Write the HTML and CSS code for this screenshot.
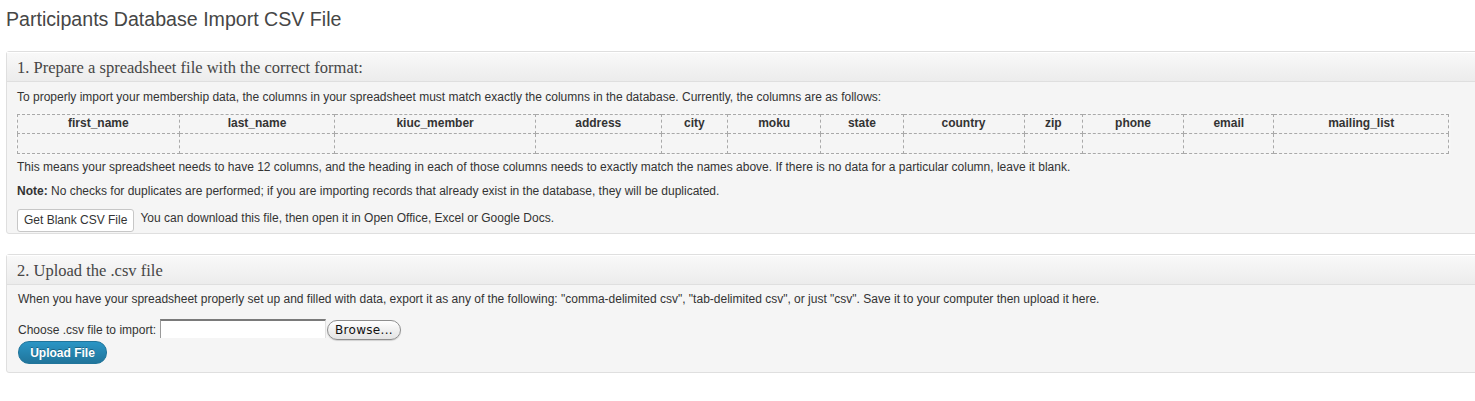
FILE: index.html
```html
<!DOCTYPE html>
<html>
<head>
<meta charset="utf-8">
<title>Participants Database Import CSV File</title>
<link rel="stylesheet" href="styles.css">
</head>
<body>
<div class="wrap">
  <h2 class="page-title">Participants Database Import CSV File</h2>

  <div class="postbox">
    <h3 class="hndle">1. Prepare a spreadsheet file with the correct format:</h3>
    <div class="inside">
      <p class="intro">To properly import your membership data, the columns in your spreadsheet must match exactly the columns in the database. Currently, the columns are as follows:</p>
      <table class="spreadsheet">
        <tr>
          <th class="c1">first_name</th>
          <th class="c2">last_name</th>
          <th class="c3">kiuc_member</th>
          <th class="c4">address</th>
          <th class="c5">city</th>
          <th class="c6">moku</th>
          <th class="c7">state</th>
          <th class="c8">country</th>
          <th class="c9">zip</th>
          <th class="c10">phone</th>
          <th class="c11">email</th>
          <th class="c12">mailing_list</th>
        </tr>
        <tr class="blank">
          <td></td><td></td><td></td><td></td><td></td><td></td><td></td><td></td><td></td><td></td><td></td><td></td>
        </tr>
      </table>
      <p class="after-table">This means your spreadsheet needs to have 12 columns, and the heading in each of those columns needs to exactly match the names above. If there is no data for a particular column, leave it blank.</p>
      <p class="note"><strong>Note:</strong> No checks for duplicates are performed; if you are importing records that already exist in the database, they will be duplicated.</p>
      <div class="download-row">
        <button class="button" type="button">Get Blank CSV File</button>
        <span class="download-hint">You can download this file, then open it in Open Office, Excel or Google Docs.</span>
      </div>
    </div>
  </div>

  <div class="postbox">
    <h3 class="hndle">2. Upload the .csv file</h3>
    <div class="inside inside-upload">
      <p class="intro-upload">When you have your spreadsheet properly set up and filled with data, export it as any of the following: "comma-delimited csv", "tab-delimited csv", or just "csv". Save it to your computer then upload it here.</p>
      <div class="file-row">
        <span class="file-label">Choose .csv file to import:</span>
        <span class="file-box"></span>
        <span class="browse">Browse...</span>
      </div>
      <button class="button-primary" type="button">Upload File</button>
    </div>
  </div>
</div>
</body>
</html>
```

FILE: styles.css
```css
html, body {
  margin: 0;
  padding: 0;
  background: #ffffff;
  overflow: hidden;
}

body {
  font-family: "Liberation Sans", Arial, sans-serif;
  font-size: 12px;
  color: #333333;
}

.wrap {
  margin-left: 6px;
  margin-right: -30px;
}

.page-title {
  margin: 5px 0 0 0;
  font-family: "Liberation Sans", Arial, sans-serif;
  font-weight: normal;
  font-size: 19.6px;
  line-height: 29px;
  color: #464646;
}

.postbox {
  margin-top: 17px;
  background: #f5f5f5;
  border: 1px solid #dfdfdf;
  border-radius: 3px;
}

.postbox + .postbox {
  margin-top: 20px;
}

.hndle {
  margin: 0;
  height: 29px;
  padding: 0 10px;
  font-family: "Liberation Serif", "Times New Roman", serif;
  font-weight: normal;
  font-size: 16.5px;
  line-height: 31px;
  color: #464646;
  background: linear-gradient(to bottom, #f9f9f9, #ececec);
  border-bottom: 1px solid #dfdfdf;
  box-shadow: inset 0 1px 0 #ffffff;
}

.inside {
  padding: 7px 10px 1px 10px;
}

.inside p {
  margin: 0;
  line-height: 16px;
}

.intro {
  margin-bottom: 9px !important;
}

.spreadsheet {
  border-collapse: collapse;
  width: 1432px;
  box-shadow: 0 0 3px rgba(255, 255, 255, 0.9);
}

.spreadsheet th,
.spreadsheet td {
  border: 1px dashed #a9a9a9;
  padding: 0;
}

.spreadsheet th {
  height: 16px;
  padding: 0 0 2px 0;
  font-weight: bold;
  font-size: 12px;
  line-height: 16px;
  color: #333333;
  text-align: center;
}

.spreadsheet .blank td {
  height: 19px;
}

.c1 { width: 162px; }
.c2 { width: 156px; }
.c3 { width: 201px; }
.c4 { width: 126px; }
.c5 { width: 66px; }
.c6 { width: 93px; }
.c7 { width: 82px; }
.c8 { width: 121px; }
.c9 { width: 58px; }
.c10 { width: 101px; }
.c11 { width: 90px; }
.c12 { width: 175px; }

.after-table {
  margin-top: 5px !important;
}

.note {
  margin-top: 8px !important;
}

.note strong {
  color: #333333;
}

.download-row {
  margin-top: 10px;
  display: flex;
  align-items: center;
  gap: 6px;
}

.button {
  height: 23px;
  padding: 0 6px 2px 6px;
  margin: 0;
  font-family: "Liberation Sans", Arial, sans-serif;
  font-size: 12px;
  color: #333333;
  background: #ffffff;
  border: 1px solid #c7c7c7;
  border-radius: 3px;
  cursor: pointer;
}

.download-hint {
  position: relative;
  top: -3px;
}

.inside-upload {
  padding: 6px 10px 8px 11px;
}

.file-row {
  margin-top: 12px;
  display: flex;
  align-items: center;
  height: 21px;
}

.file-label {
  margin-right: 4px;
}

.file-box {
  width: 164px;
  height: 17px;
  background: #ffffff;
  border-top: 2px solid #7a7a7a;
  border-left: 1px solid #9a9a9a;
  border-right: 1px solid #e2e2e2;
  margin-top: -2px;
}

.browse {
  height: 18px;
  padding: 0 7px;
  margin-left: 1px;
  border: 1px solid #8e8e8e;
  border-radius: 10px;
  background: linear-gradient(to bottom, #ffffff, #f0f0f0 50%, #e4e4e4);
  box-shadow: 0 1px 1px rgba(0, 0, 0, 0.15);
  font-family: "DejaVu Sans", "Liberation Sans", sans-serif;
  font-size: 12px;
  line-height: 18px;
  color: #111111;
  letter-spacing: 0.3px;
}

.button-primary {
  display: block;
  margin-top: 1px;
  width: 89px;
  height: 23px;
  padding: 0;
  font-family: "Liberation Sans", Arial, sans-serif;
  font-weight: bold;
  font-size: 12px;
  color: #ffffff;
  background: linear-gradient(to bottom, #2a95c5, #21759b);
  border: 1px solid #21759b;
  border-radius: 11px;
  text-shadow: 0 -1px 0 rgba(0, 0, 0, 0.3);
  cursor: pointer;
}
```
